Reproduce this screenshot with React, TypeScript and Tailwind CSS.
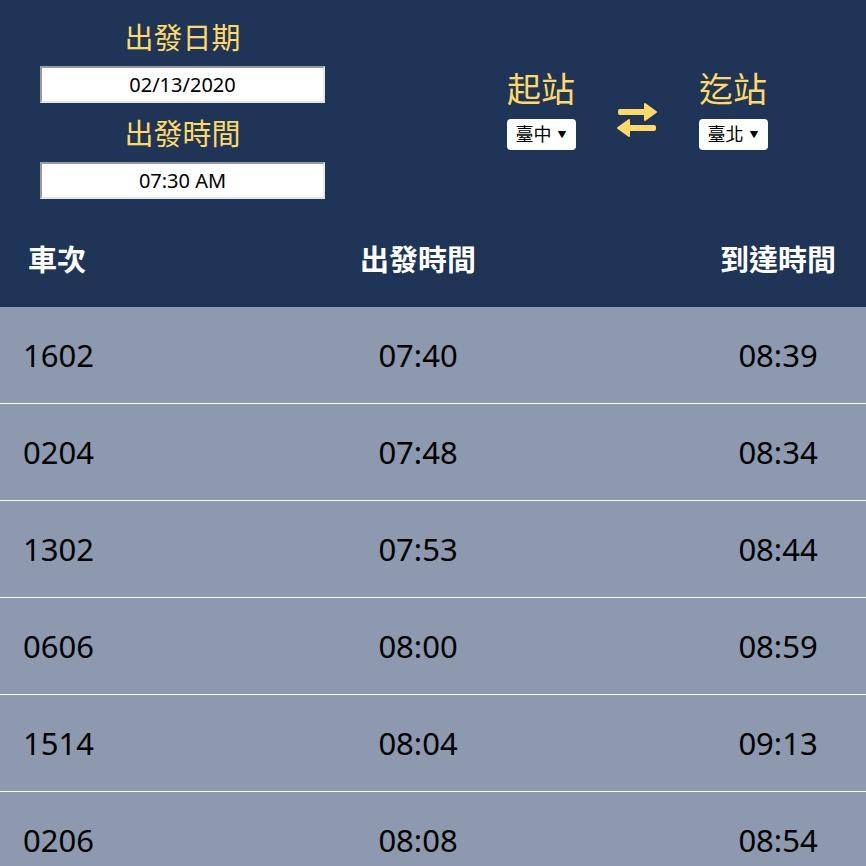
const trains = [
  { no: "1602", dep: "07:40", arr: "08:39" },
  { no: "0204", dep: "07:48", arr: "08:34" },
  { no: "1302", dep: "07:53", arr: "08:44" },
  { no: "0606", dep: "08:00", arr: "08:59" },
  { no: "1514", dep: "08:04", arr: "09:13" },
  { no: "0206", dep: "08:08", arr: "08:54" },
];

const font = { fontFamily: '"Noto Sans", "Noto Sans CJK TC", sans-serif' };

function FakeInput({ value }: { value: string }) {
  return (
    <input
      readOnly
      value={value}
      className="h-[37px] w-[285px] border-2 border-t-[#9a9a9a] border-l-[#9a9a9a] border-r-[#e6e6e6] border-b-[#e6e6e6] bg-white text-center text-[20px] text-black outline-none"
      style={font}
    />
  );
}

function StationSelect({ value }: { value: string }) {
  return (
    <div className="flex h-[31px] w-[69px] items-center justify-center gap-[6px] rounded-[4px] bg-white text-[18px] text-black">
      <span>{value}</span>
      <span className="text-[9px]">▼</span>
    </div>
  );
}

function SwapIcon() {
  return (
    <svg width="40" height="34" viewBox="0 0 40 34" fill="#ffd966">
      <rect x="1" y="6" width="30" height="6" rx="2" />
      <path d="M28 1 L39 9 L28 17 Z" strokeLinejoin="round" stroke="#ffd966" strokeWidth="2" />
      <rect x="9" y="22" width="30" height="6" rx="2" />
      <path d="M12 17 L1 25 L12 33 Z" strokeLinejoin="round" stroke="#ffd966" strokeWidth="2" />
    </svg>
  );
}

export default function App() {
  return (
    <div className="min-h-screen w-full bg-[#8c99ae]" style={font}>
      <div className="bg-[#1e3557]">
        <div className="flex h-[220px]">
          <div className="ml-[40px] flex w-[285px] flex-col items-center pt-[18px]">
            <div className="h-[40px] text-[29px] leading-[40px] text-[#ffd966]">出發日期</div>
            <div className="mt-[8px]">
              <FakeInput value="02/13/2020" />
            </div>
            <div className="mt-[11px] h-[40px] text-[29px] leading-[40px] text-[#ffd966]">出發時間</div>
            <div className="mt-[8px]">
              <FakeInput value="07:30 AM" />
            </div>
          </div>
          <div className="ml-[176px] flex pt-[69px]">
            <div className="flex w-[80px] flex-col items-center">
              <div className="h-[40px] text-[34px] leading-[40px] text-[#ffd966]">起站</div>
              <div className="mt-[10px]">
                <StationSelect value="臺中" />
              </div>
            </div>
            <div className="flex w-[112px] items-start justify-center pt-[34px]">
              <SwapIcon />
            </div>
            <div className="flex w-[80px] flex-col items-center">
              <div className="h-[40px] text-[34px] leading-[40px] text-[#ffd966]">迄站</div>
              <div className="mt-[10px]">
                <StationSelect value="臺北" />
              </div>
            </div>
          </div>
        </div>
        <div className="flex h-[87px] items-center pb-[7px] text-[29px] font-bold text-white">
          <div className="w-[300px] pl-[28px]">車次</div>
          <div className="w-[236px] text-center">出發時間</div>
          <div className="ml-auto w-[176px] text-center">到達時間</div>
        </div>
      </div>
      <div>
        {trains.map((t) => (
          <div
            key={t.no}
            className="flex h-[97px] items-center border-b border-white text-[31px] text-black"
          >
            <div className="w-[300px] pl-[23px]">{t.no}</div>
            <div className="w-[236px] text-center">{t.dep}</div>
            <div className="ml-auto w-[176px] text-center">{t.arr}</div>
          </div>
        ))}
      </div>
    </div>
  );
}
